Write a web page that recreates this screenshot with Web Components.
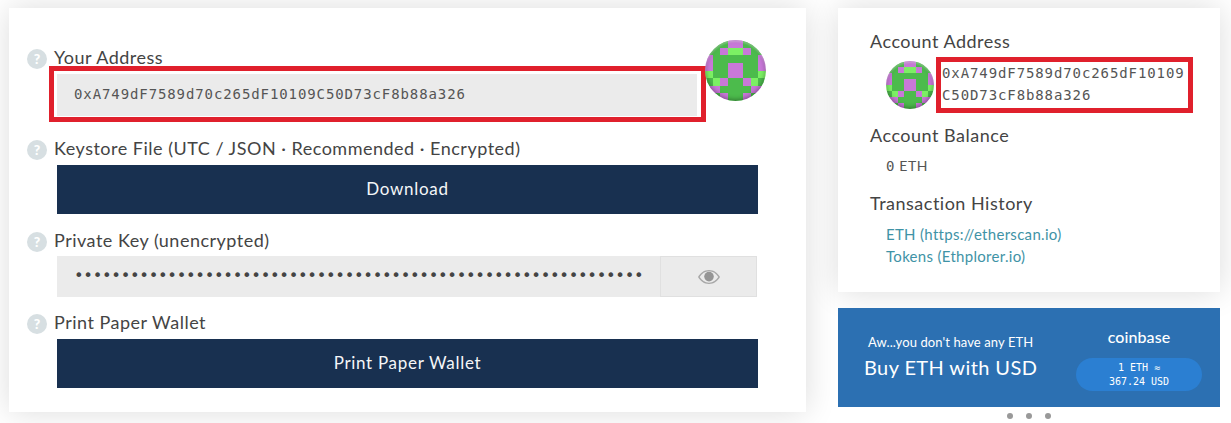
<!DOCTYPE html>
<html>
<head>
<meta charset="utf-8">
<title>Wallet</title>
<style>
  html, body { margin: 0; height: 100%; overflow: hidden; }
  body { background: #fff; color: #333; font-family: Lato, "Liberation Sans", sans-serif; }
</style>
</head>
<body>
<wallet-page>
  <wallet-card>
    <id-icon class="floating" size="61"></id-icon>
    <wallet-field label="Your Address" tight>
      <red-box inset>
        <key-input text="0xA749dF7589d70c265dF10109C50D73cF8b88a326"></key-input>
      </red-box>
    </wallet-field>
    <wallet-field label="Keystore File (UTC / JSON · Recommended · Encrypted)">
      <dark-button>Download</dark-button>
    </wallet-field>
    <wallet-field label="Private Key (unencrypted)" short>
      <key-input masked="61" eye></key-input>
    </wallet-field>
    <wallet-field label="Print Paper Wallet">
      <dark-button>Print Paper Wallet</dark-button>
    </wallet-field>
  </wallet-card>
  <side-column>
    <account-panel></account-panel>
    <coin-banner></coin-banner>
    <slide-dots></slide-dots>
  </side-column>
</wallet-page>

<script>
const MONO = '"DejaVu Sans Mono", "Liberation Mono", monospace'

class WalletPage extends HTMLElement{
  constructor(){
    super()
    this.attachShadow({mode: 'open'})
  }
  connectedCallback(){
    this.shadowRoot.innerHTML = `
      <style>
        :host{
          display: flex;
          align-items: flex-start;
          gap: 32px;
          padding: 8px 0 0 9px;
        }
      </style>
      <slot></slot>
    `
  }
}

class WalletCard extends HTMLElement{
  constructor(){
    super()
    this.attachShadow({mode: 'open'})
  }
  connectedCallback(){
    this.shadowRoot.innerHTML = `
      <style>
        :host{
          display: block;
          position: relative;
          box-sizing: border-box;
          width: 797px;
          height: 404px;
          padding: 38px 48px 24px;
          background: #fff;
          box-shadow: 0 0 30px rgba(0,0,0,0.14);
        }
        ::slotted(id-icon.floating){
          position: absolute;
          top: 32px;
          left: 696px;
        }
      </style>
      <slot></slot>
    `
  }
}

class WalletField extends HTMLElement{
  constructor(){
    super()
    this.attachShadow({mode: 'open'})
  }
  connectedCallback(){
    this.shadowRoot.innerHTML = `
      <style>
        :host{
          display: block;
          margin-bottom: 15px;
        }
        :host([short]){
          margin-bottom: 14px;
        }
        header{
          display: flex;
          align-items: flex-start;
          height: 22px;
          margin: 0 0 6px -30px;
        }
        :host([tight]) header{
          margin-bottom: -2px;
        }
        :host([short]) header{
          margin-bottom: 5px;
        }
        .help{
          flex: none;
          width: 20px;
          height: 20px;
          margin: 3px 7px 0 0;
          border-radius: 50%;
          background: #d7dfe2;
          color: #fff;
          font: 900 14px/20px Lato, sans-serif;
          text-align: center;
        }
        label{
          font-size: 18px;
          line-height: 22px;
          letter-spacing: 0.5px;
          color: #444;
          white-space: nowrap;
        }
      </style>
      <header><span class="help">?</span><label>${this.getAttribute('label')}</label></header>
      <slot></slot>
    `
  }
}

class RedBox extends HTMLElement{
  constructor(){
    super()
    this.attachShadow({mode: 'open'})
  }
  connectedCallback(){
    this.shadowRoot.innerHTML = `
      <style>
        :host{
          display: block;
          box-sizing: border-box;
          border: 5px solid #e0202c;
          background: #fff;
        }
        :host([inset]){
          width: 657px;
          height: 56px;
          margin-left: -8px;
          padding: 3px 4px 1px 3px;
        }
      </style>
      <slot></slot>
    `
  }
}

class KeyInput extends HTMLElement{
  constructor(){
    super()
    this.attachShadow({mode: 'open'})
  }
  connectedCallback(){
    const masked = this.getAttribute('masked')
    const text = masked ? '•'.repeat(Number(masked)) : this.getAttribute('text')
    const eye = this.hasAttribute('eye') ? `
      <span class="addon">
        <svg width="22" height="14" viewBox="0 0 22 14">
          <path fill="#a8a8a8" fill-rule="evenodd" d="M11 0C6.2 0 2.4 2.800 0 7c2.400 4.200 6.200 7 11 7s8.600-2.800 11-7C19.600 2.800 15.800 0 11 0zM11 1.300c4 0 7.200 2.300 9.300 5.700-2.100 3.400-5.300 5.700-9.300 5.700S3.800 10.400 1.700 7C3.800 3.600 7 1.300 11 1.300z"/>
          <circle cx="11" cy="6.600" r="4.800" fill="#959595"/>
        </svg>
      </span>` : ''
    this.shadowRoot.innerHTML = `
      <style>
        :host{
          display: flex;
          height: 42px;
          width: 100%;
          background: #ebebeb;
        }
        :host([eye]){
          width: 700px;
          height: 41px;
        }
        .value{
          flex: 1;
          padding-left: 17px;
          font: 14px/40px ${MONO};
          letter-spacing: 0.9px;
          color: #555;
          white-space: nowrap;
          overflow: hidden;
        }
        :host([masked]) .value{
          font-size: 16px;
          letter-spacing: -0.3px;
          color: #444;
        }
        .addon{
          flex: none;
          box-sizing: border-box;
          width: 97px;
          display: flex;
          align-items: center;
          justify-content: center;
          border: 1px solid #e0e0e0;
        }
      </style>
      <span class="value">${text}</span>${eye}
    `
  }
}

class DarkButton extends HTMLElement{
  constructor(){
    super()
    this.attachShadow({mode: 'open'})
  }
  connectedCallback(){
    this.shadowRoot.innerHTML = `
      <style>
        :host{
          display: flex;
          align-items: center;
          justify-content: center;
          box-sizing: border-box;
          width: 701px;
          height: 49px;
          padding-bottom: 2px;
          background: #183050;
          color: #f4f6f8;
          font-size: 17px;
          letter-spacing: 0.7px;
        }
      </style>
      <slot></slot>
    `
  }
}

// blockie colours: g green, l lilac, s light green
const ICON_ROWS = [
  'gggllggg',
  'gglsslgg',
  'lggggggl',
  'lggllggl',
  'sggllggs',
  'gslgglsg',
  'llggggll',
  'gglgglgg'
]
const ICON_COLOURS = {g: '#4cbb4c', l: '#c878d8', s: '#7cf064'}

class IdIcon extends HTMLElement{
  constructor(){
    super()
    this.attachShadow({mode: 'open'})
  }
  connectedCallback(){
    const size = this.getAttribute('size')
    let rects = ''
    ICON_ROWS.forEach((row, y) => {
      row.split('').forEach((c, x) => {
        rects += `<rect x="${x}" y="${y}" width="1.02" height="1.02" fill="${ICON_COLOURS[c]}"/>`
      })
    })
    this.shadowRoot.innerHTML = `
      <style>
        :host{
          display: block;
          position: relative;
          flex: none;
          width: ${size}px;
          height: ${size}px;
          border-radius: 50%;
          overflow: hidden;
        }
        svg{
          display: block;
          width: 100%;
          height: 100%;
        }
        :host::after{
          content: '';
          position: absolute;
          inset: 0;
          border-radius: 50%;
          box-shadow: inset rgba(255,255,255,0.3) 0 2px 2px, inset rgba(0,0,0,0.4) 0 -1px 5px;
        }
      </style>
      <svg viewBox="0 0 8 8" shape-rendering="crispEdges">${rects}</svg>
    `
  }
}

class SideColumn extends HTMLElement{
  constructor(){
    super()
    this.attachShadow({mode: 'open'})
  }
  connectedCallback(){
    this.shadowRoot.innerHTML = `
      <style>
        :host{
          display: flex;
          flex-direction: column;
          width: 382px;
        }
      </style>
      <slot></slot>
    `
  }
}

class AccountPanel extends HTMLElement{
  constructor(){
    super()
    this.attachShadow({mode: 'open'})
  }
  connectedCallback(){
    this.shadowRoot.innerHTML = `
      <style>
        :host{
          display: block;
          box-sizing: border-box;
          height: 284px;
          padding: 21px 27px 0 32px;
          background: #fff;
          box-shadow: 0 0 30px rgba(0,0,0,0.14);
          margin-bottom: 16px;
        }
        h5{
          margin: 0;
          font-size: 18px;
          font-weight: 400;
          line-height: 24px;
          letter-spacing: 0.5px;
          color: #444;
        }
        .address{
          display: flex;
          align-items: center;
          gap: 2px;
          margin: 4px 0 10px 16px;
        }
        red-box{
          width: 257px;
          height: 56px;
          padding: 0 0 0 1px;
          font: 14px/22px ${MONO};
          letter-spacing: 0.9px;
          color: #555;
          word-break: break-all;
        }
        .address span{
          display: block;
        }
        .balance{
          margin: 8px 0 14px 16px;
          font-size: 14px;
          line-height: 22px;
          color: #555;
          letter-spacing: 0.6px;
        }
        .balance b{
          font: 14px ${MONO};
        }
        .links{
          display: flex;
          flex-direction: column;
          margin: 8px 0 0 16px;
          font-size: 15px;
          line-height: 22px;
          letter-spacing: 0.3px;
        }
        a{
          color: #3f93a6;
          text-decoration: none;
        }
      </style>
      <h5>Account Address</h5>
      <div class="address">
        <id-icon size="48"></id-icon>
        <red-box><span>0xA749dF7589d70c265dF10109C50D73cF8b88a326</span></red-box>
      </div>
      <h5>Account Balance</h5>
      <div class="balance"><b>0</b> ETH</div>
      <h5>Transaction History</h5>
      <div class="links">
        <a href="#">ETH (https://etherscan.io)</a>
        <a href="#">Tokens (Ethplorer.io)</a>
      </div>
    `
  }
}

class CoinBanner extends HTMLElement{
  constructor(){
    super()
    this.attachShadow({mode: 'open'})
  }
  connectedCallback(){
    this.shadowRoot.innerHTML = `
      <style>
        :host{
          display: flex;
          justify-content: space-between;
          box-sizing: border-box;
          height: 99px;
          padding: 0 18px 0 26px;
          background: #2c70b2;
          color: #fff;
        }
        .pitch{
          display: flex;
          flex-direction: column;
          align-items: center;
          padding-top: 25px;
        }
        .sorry{
          font-size: 13px;
          line-height: 18px;
          letter-spacing: 0.1px;
        }
        .buy{
          margin-top: 3px;
          font-size: 20px;
          line-height: 26px;
          letter-spacing: 0.4px;
        }
        .rate{
          display: flex;
          flex-direction: column;
          align-items: center;
          padding-top: 19px;
        }
        .logo{
          font-size: 16px;
          line-height: 20px;
          font-weight: 500;
          letter-spacing: 0.1px;
        }
        .pill{
          width: 126px;
          height: 33px;
          margin-top: 11px;
          border-radius: 17px;
          background: #2b7fd2;
          font: 10px/14px ${MONO};
          text-align: center;
          padding-top: 3px;
          box-sizing: border-box;
        }
      </style>
      <div class="pitch">
        <span class="sorry">Aw...you don't have any ETH</span>
        <span class="buy">Buy ETH with USD</span>
      </div>
      <div class="rate">
        <span class="logo">coinbase</span>
        <div class="pill">1 ETH ≈<br>367.24 USD</div>
      </div>
    `
  }
}

class SlideDots extends HTMLElement{
  constructor(){
    super()
    this.attachShadow({mode: 'open'})
  }
  connectedCallback(){
    this.shadowRoot.innerHTML = `
      <style>
        :host{
          display: flex;
          justify-content: center;
          gap: 13px;
          margin-top: 6px;
        }
        i{
          width: 6px;
          height: 6px;
          border-radius: 50%;
          background: #999;
        }
      </style>
      <i></i><i></i><i></i>
    `
  }
}

customElements.define('wallet-page', WalletPage)
customElements.define('wallet-card', WalletCard)
customElements.define('wallet-field', WalletField)
customElements.define('red-box', RedBox)
customElements.define('key-input', KeyInput)
customElements.define('dark-button', DarkButton)
customElements.define('id-icon', IdIcon)
customElements.define('side-column', SideColumn)
customElements.define('account-panel', AccountPanel)
customElements.define('coin-banner', CoinBanner)
customElements.define('slide-dots', SlideDots)
</script>
</body>
</html>
